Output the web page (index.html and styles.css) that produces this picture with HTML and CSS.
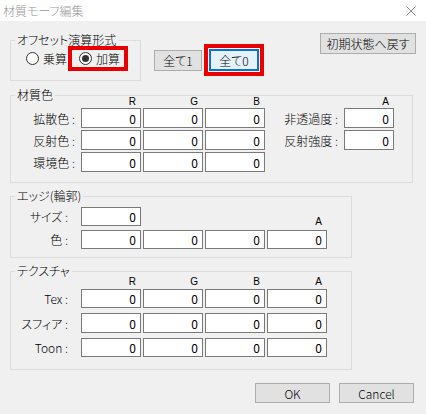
FILE: index.html
```html
<!DOCTYPE html>
<html lang="ja">
<head>
<meta charset="utf-8">
<title>材質モーフ編集</title>
<link rel="stylesheet" href="styles.css">
</head>
<body>
<div class="window">
  <div class="titlebar">
    <span class="title">材質モーフ編集</span>
    <svg class="close" width="10" height="10" viewBox="0 0 10 10"><path d="M0.5 0.5L9.5 9.5M9.5 0.5L0.5 9.5" stroke="#8a8a8a" stroke-width="1" fill="none"/></svg>
  </div>

  <div class="top">
    <div class="group offset">
      <div class="group-title">オフセット演算形式</div>
      <div class="radios">
        <label class="radio"><span class="dot"></span><span>乗算</span></label>
        <label class="radio selected mark"><span class="dot"></span><span>加算</span></label>
      </div>
    </div>
    <button class="btn all1">全て1</button>
    <div class="mark mark-btn"><button class="btn default">全て0</button></div>
    <button class="btn reset">初期状態へ戻す</button>
  </div>

  <div class="group material">
    <div class="group-title">材質色</div>
    <div class="grid mat-grid">
      <span></span><span class="hdr">R</span><span class="hdr">G</span><span class="hdr">B</span><span></span><span class="hdr">A</span>
      <span class="lbl">拡散色 :</span><span class="num">0</span><span class="num">0</span><span class="num">0</span><span class="lbl">非透過度 :</span><span class="num">0</span>
      <span class="lbl">反射色 :</span><span class="num">0</span><span class="num">0</span><span class="num">0</span><span class="lbl">反射強度 :</span><span class="num">0</span>
      <span class="lbl">環境色 :</span><span class="num">0</span><span class="num">0</span><span class="num">0</span><span></span><span></span>
    </div>
  </div>

  <div class="group edge">
    <div class="group-title">エッジ(輪郭)</div>
    <div class="grid edge-grid">
      <span class="lbl">サイズ :</span><span class="num">0</span><span></span><span></span><span class="hdr hdr-low">A</span>
      <span class="lbl">色 :</span><span class="num">0</span><span class="num">0</span><span class="num">0</span><span class="num">0</span>
    </div>
  </div>

  <div class="group tex">
    <div class="group-title">テクスチャ</div>
    <div class="grid tex-grid">
      <span></span><span class="hdr">R</span><span class="hdr">G</span><span class="hdr">B</span><span class="hdr">A</span>
      <span class="lbl">Tex :</span><span class="num">0</span><span class="num">0</span><span class="num">0</span><span class="num">0</span>
      <span class="lbl">スフィア :</span><span class="num">0</span><span class="num">0</span><span class="num">0</span><span class="num">0</span>
      <span class="lbl">Toon :</span><span class="num">0</span><span class="num">0</span><span class="num">0</span><span class="num">0</span>
    </div>
  </div>

  <div class="footer">
    <button class="btn">OK</button>
    <button class="btn">Cancel</button>
  </div>
</div>
</body>
</html>
```
FILE: styles.css
```css
* { box-sizing: border-box; }

body {
  margin: 0;
  background: #f0f0f0;
  font-family: "Noto Sans CJK JP", sans-serif;
  font-size: 12px;
  font-weight: 300;
  color: #000;
}

.window {
  width: 426px;
  height: 414px;
  background: #f0f0f0;
  overflow: hidden;
}

.titlebar {
  height: 21px;
  background: #fff;
  display: flex;
  align-items: center;
  justify-content: space-between;
  padding: 0 10px 0 3px;
}

.title {
  color: #9a9a9a;
  line-height: 21px;
  font-feature-settings: "palt";
}

.close { display: block; }

.top {
  display: flex;
  align-items: flex-start;
  height: 60px;
  padding-left: 10px;
}

.group {
  border: 1px solid #dcdcdc;
}

.group-title {
  width: max-content;
  height: 14px;
  margin: -8px 0 0 4px;
  padding: 0 2px;
  line-height: 14px;
  background: #f0f0f0;
  font-feature-settings: "palt";
}

.offset {
  width: 131px;
  margin-top: 19px;
  padding-bottom: 9px;
}

.radios {
  display: flex;
  align-items: center;
  height: 25px;
  margin-top: -1px;
  padding-left: 15px;
}

.radio {
  display: flex;
  align-items: center;
  gap: 4px;
  line-height: 14px;
}

.dot {
  width: 13px;
  height: 13px;
  border: 1px solid #333;
  border-radius: 50%;
  background: #fff;
  display: flex;
  align-items: center;
  justify-content: center;
}

.selected .dot::after {
  content: "";
  width: 7px;
  height: 7px;
  border-radius: 50%;
  background: #333;
}

.mark {
  border: 4px solid #e80000;
}

.radio.mark {
  height: 25px;
  margin-left: 1px;
  padding: 0 4px 0 7px;
}

.btn {
  font: inherit;
  font-feature-settings: "palt";
  color: #000;
  background: #e1e1e1;
  border: 1px solid #adadad;
  padding: 0;
  line-height: 17px;
}

.all1 {
  width: 48px;
  height: 21px;
  margin: 29px 0 0 13px;
}

.mark-btn {
  display: flex;
  padding: 1px;
  margin: 23px 0 0 2px;
}

.default {
  width: 50px;
  height: 22px;
  border: 2px solid #0a74cc;
  background: #e5f1fb;
}

.reset {
  width: 96px;
  height: 21px;
  margin: 12px 10px 0 auto;
}

.material {
  margin: 14px 13px 0 10px;
  padding-bottom: 10px;
}

.edge {
  width: 342px;
  margin: 13px 0 0 10px;
  padding-bottom: 8px;
}

.tex {
  width: 342px;
  margin: 13px 0 0 10px;
  padding-bottom: 12px;
}

.grid {
  display: grid;
  column-gap: 2px;
  margin-left: 17px;
}

.mat-grid {
  grid-template-columns: 51px 60px 60px 60px 75px 50px;
  grid-template-rows: 8px 20px 20px 20px;
  row-gap: 2px;
  margin-top: -4px;
}

.edge-grid {
  grid-template-columns: 51px 60px 60px 60px 60px;
  grid-template-rows: 19px 19px;
  row-gap: 4px;
  margin-top: 4px;
}

.tex-grid {
  grid-template-columns: 51px 60px 60px 60px 60px;
  grid-template-rows: 6px 19px 20px 19px;
  row-gap: 5px;
}

.hdr {
  font-family: "Liberation Sans", sans-serif;
  font-weight: 400;
  font-size: 10px;
  line-height: 8px;
  height: 8px;
  text-align: right;
  padding-right: 5px;
}

.hdr-low {
  align-self: end;
}

.lbl {
  display: flex;
  align-items: center;
  justify-content: flex-end;
  padding-right: 4px;
  white-space: nowrap;
  font-feature-settings: "palt";
}

.edge-grid .lbl,
.tex-grid .lbl {
  padding-right: 11px;
}

.num {
  display: flex;
  align-items: center;
  justify-content: flex-end;
  padding-right: 4px;
  font-weight: 400;
  background: #fff;
  border: 1px solid #7a7a7a;
}

.footer {
  display: flex;
  justify-content: flex-end;
  gap: 9px;
  margin-top: 13px;
  padding-right: 12px;
}

.footer .btn {
  width: 75px;
  height: 20px;
}
```
